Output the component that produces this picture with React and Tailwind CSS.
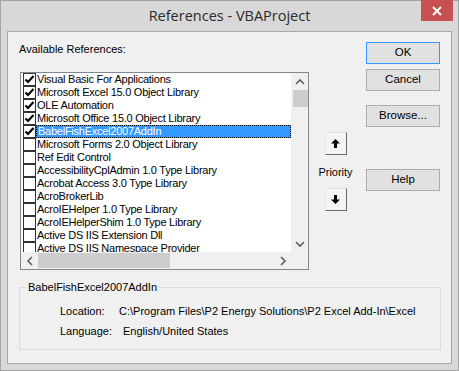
const refs = [
  ['Visual Basic For Applications', true],
  ['Microsoft Excel 15.0 Object Library', true],
  ['OLE Automation', true],
  ['Microsoft Office 15.0 Object Library', true],
  ['BabelFishExcel2007AddIn', true, true],
  ['Microsoft Forms 2.0 Object Library', false],
  ['Ref Edit Control', false],
  ['AccessibilityCplAdmin 1.0 Type Library', false],
  ['Acrobat Access 3.0 Type Library', false],
  ['AcroBrokerLib', false],
  ['AcroIEHelper 1.0 Type Library', false],
  ['AcroIEHelperShim 1.0 Type Library', false],
  ['Active DS IIS Extension Dll', false],
  ['Active DS IIS Namespace Provider', false],
];

function Check({ checked }) {
  return (
    <div className="ml-[2px] h-[13px] w-[13px] shrink-0 border border-[#333333] bg-white">
      {checked && (
        <svg width="11" height="11" viewBox="0 0 11 11">
          <path d="M1.5 5.5 L4 8 L9.5 2" fill="none" stroke="#000" strokeWidth="2.2" />
        </svg>
      )}
    </div>
  );
}

function Chevron({ dir }) {
  const d = {
    up: 'M1 6 L5 2 L9 6',
    down: 'M1 2 L5 6 L9 2',
    left: 'M6 1 L2 5 L6 9',
    right: 'M2 1 L6 5 L2 9',
  }[dir];
  const vertical = dir === 'up' || dir === 'down';
  return (
    <svg width={vertical ? 10 : 8} height={vertical ? 8 : 10} viewBox={vertical ? '0 0 10 8' : '0 0 8 10'}>
      <path d={d} fill="none" stroke="#606060" strokeWidth="1.6" />
    </svg>
  );
}

function Button({ children, primary, className = '' }) {
  return (
    <div
      className={`flex h-[22px] w-[74px] items-center justify-center border bg-[#e1e1e1] text-[11.5px] text-[#000] ${
        primary ? 'border-[#3399ff]' : 'border-[#adadad]'
      } ${className}`}
    >
      {children}
    </div>
  );
}

function ArrowButton({ up, className = '' }) {
  return (
    <div
      className={`flex h-[23px] w-[22px] items-center justify-center border-t border-l border-t-[#e3e3e3] border-l-[#e3e3e3] border-b border-r border-b-[#696969] border-r-[#696969] bg-[#f4f4f4] ${className}`}
    >
      <svg width="11" height="11" viewBox="0 0 11 11">
        {up ? (
          <path d="M5.5 1 L10 5.5 L7 5.5 L7 10 L4 10 L4 5.5 L1 5.5 Z" fill="#000" />
        ) : (
          <path d="M5.5 10 L10 5.5 L7 5.5 L7 1 L4 1 L4 5.5 L1 5.5 Z" fill="#000" />
        )}
      </svg>
    </div>
  );
}

export default function App() {
  return (
    <div className="relative flex h-[371px] w-[459px] flex-col border border-[#a3a3a3] bg-[#d8d8d8] font-['Liberation_Sans',Arial,sans-serif]">
      {/* title bar */}
      <div className="flex h-[30px] items-center justify-center pb-[1px] font-['Open_Sans',sans-serif] text-[14.5px] text-[#2a2a2a]">
        References - VBAProject
      </div>
      <div className="absolute right-[5px] top-[-1px] flex h-[21px] w-[32px] items-center justify-center bg-[#c75050]">
        <svg width="10" height="10" viewBox="0 0 10 10">
          <path d="M1 1 L9 9 M9 1 L1 9" stroke="#fff" strokeWidth="2" />
        </svg>
      </div>

      {/* client area */}
      <div className="mx-[6px] flex h-[333px] flex-col border border-[#a8a8a8] bg-[#f0f0f0]">
        <div className="flex">
          {/* left column */}
          <div className="ml-[12px] w-[289px] pt-[10px]">
            <div className="-ml-[1px] h-[15px] text-[11px] leading-[15px] text-[#000]">Available References:</div>
            <div className="mt-[15px] flex h-[198px] flex-col border border-[#828790] bg-white">
              <div className="flex h-[179px]">
                <div className="flex-1 overflow-hidden text-[11px] tracking-[-0.25px] text-[#000]">
                  {refs.map(([name, checked, selected]) => (
                    <div key={name} className="flex h-[13px] items-center whitespace-nowrap">
                      <Check checked={checked} />
                      <div
                        className={`flex h-[13px] flex-1 items-center pl-[1px] leading-[13px] ${
                          selected ? 'border border-dotted border-[#000] bg-[#3399ff] text-white' : ''
                        }`}
                      >
                        {name}
                      </div>
                    </div>
                  ))}
                </div>
                <div className="flex w-[17px] flex-col items-center bg-[#f0f0f0]">
                  <div className="flex h-[17px] items-center justify-center">
                    <Chevron dir="up" />
                  </div>
                  <div className="ml-[1px] h-[17px] w-[15px] bg-[#cdcdcd]" />
                  <div className="flex-1" />
                  <div className="flex h-[17px] items-center justify-center">
                    <Chevron dir="down" />
                  </div>
                </div>
              </div>
              <div className="flex h-[17px] items-center bg-[#f0f0f0]">
                <div className="flex w-[17px] items-center justify-center">
                  <Chevron dir="left" />
                </div>
                <div className="h-[15px] w-[132px] bg-[#cdcdcd]" />
                <div className="flex-1" />
                <div className="flex w-[17px] items-center justify-center">
                  <Chevron dir="right" />
                </div>
                <div className="w-[17px]" />
              </div>
            </div>
          </div>

          {/* priority column */}
          <div className="ml-[6px] flex w-[41px] flex-col items-center pt-[100px]">
            <ArrowButton up />
            <div className="mt-[10px] h-[14px] text-[11px] leading-[14px] text-[#000]">Priority</div>
            <ArrowButton className="mt-[9px]" />
          </div>

          {/* buttons column */}
          <div className="ml-[10px] flex flex-col pt-[10px]">
            <Button primary>OK</Button>
            <Button className="mt-[5px]">Cancel</Button>
            <Button className="mt-[14px]">Browse...</Button>
            <Button className="mt-[42px]">Help</Button>
          </div>
        </div>

        {/* group box */}
        <fieldset className="ml-[11px] mt-[10px] h-[70px] w-[422px] border border-[#dcdcdc] text-[11px] text-[#000]">
          <legend className="ml-[6px] px-[2px] leading-[14px]">BabelFishExcel2007AddIn</legend>
          <div className="ml-[40px] mt-[10px] flex h-[14px] items-center leading-[14px]">
            <div className="w-[59px]">Location:</div>
            <div className="w-[300px] overflow-hidden whitespace-nowrap">
              C:\Program Files\P2 Energy Solutions\P2 Excel Add-In\Excel 2007\BabelFish.xlam
            </div>
          </div>
          <div className="ml-[40px] mt-[6px] flex h-[14px] items-center leading-[14px]">
            <div className="w-[63px]">Language:</div>
            <div>English/United States</div>
          </div>
        </fieldset>
      </div>
    </div>
  );
}
